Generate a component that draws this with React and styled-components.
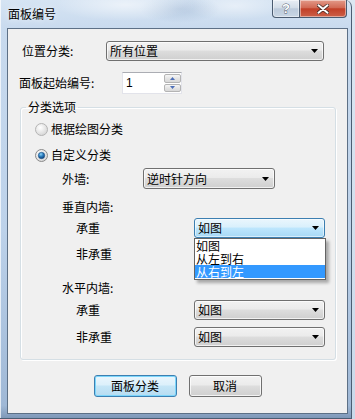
import React from 'react'
import styled, { createGlobalStyle } from 'styled-components'

const GlobalStyle = createGlobalStyle`
  html, body {
    margin: 0;
    padding: 0;
  }
  body {
    width: 355px;
    height: 419px;
    overflow: hidden;
    background: linear-gradient(180deg, #dce7f2, #c9d9ea);
    font-family: "Noto Sans CJK SC", "Noto Sans", sans-serif;
    font-size: 12px;
    color: #000;
  }
`

const Window = styled.div`
  width: 352px;
  height: 419px;
  box-sizing: border-box;
  padding: 0 3px 4px 7px;
  display: flex;
  flex-direction: column;
  border-radius: 0 7px 0 0;
  border-right: 1px solid #4b5d72;
  border-bottom: 1px solid #4b5d72;
  box-shadow: inset 1px 0 0 rgba(255, 255, 255, 0.7);
  background:
    radial-gradient(ellipse 70px 16px at 125px 5px, rgba(255, 255, 255, 0.55), transparent),
    radial-gradient(ellipse 40px 14px at 180px 9px, rgba(110, 140, 180, 0.25), transparent),
    radial-gradient(ellipse 50px 14px at 235px 6px, rgba(255, 255, 255, 0.45), transparent),
    linear-gradient(180deg, #d6e4f3 0%, #c8daee 7%, #bdd2ea 55%, #9fb8d6 97%, #7f98b8 100%);
`

const TitleBar = styled.div`
  height: 28px;
  display: flex;
  justify-content: space-between;
  align-items: flex-start;
  flex-shrink: 0;
`

const Title = styled.div`
  margin: 7px 0 0 1px;
  font-size: 12px;
  line-height: 14px;
  color: #000;
  text-shadow: 0 0 6px rgba(255, 255, 255, 0.9);
`

const CaptionButtons = styled.div`
  display: flex;
  margin-right: 1px;
`

const CaptionButton = styled.div`
  width: ${p => p.$w}px;
  height: 18px;
  box-sizing: border-box;
  border: 1px solid #4a5b70;
  border-top: none;
  display: flex;
  align-items: center;
  justify-content: center;
  box-shadow: inset 0 0 0 1px rgba(255, 255, 255, 0.45);
  border-radius: ${p => (p.$close ? '0 0 4px 0' : '0 0 0 4px')};
  border-left: ${p => (p.$close ? 'none' : '1px solid #4a5b70')};
  background: ${p =>
    p.$close
      ? 'linear-gradient(180deg, #e39a89 0%, #d26a55 45%, #c23f27 52%, #cc6048 100%)'
      : 'linear-gradient(180deg, #e8eef5 0%, #d3dde8 45%, #bccadb 52%, #c9d6e4 100%)'};
`

const Client = styled.div`
  flex: 1;
  background: #f0f0f0;
  border: 1px solid #5d7086;
  display: flex;
  flex-direction: column;
  padding-top: 12px;
`

const Row = styled.div`
  display: flex;
  align-items: center;
  height: ${p => p.$h || 20}px;
  margin-top: ${p => p.$mt || 0}px;
  padding-left: ${p => p.$pl || 0}px;
  flex-shrink: 0;
`

const Label = styled.div`
  width: ${p => (p.$w ? `${p.$w}px` : 'auto')};
  font-size: 12px;
  line-height: 14px;
  white-space: nowrap;
  flex-shrink: 0;
`

const Combo = styled.div`
  position: relative;
  width: ${p => p.$w}px;
  height: ${p => p.$h || 20}px;
  box-sizing: border-box;
  border: 1px solid ${p => (p.$focused ? '#3c7fb1' : '#707070')};
  border-radius: 3px;
  display: flex;
  align-items: center;
  padding-left: 3px;
  box-shadow: inset 0 0 0 1px ${p => (p.$focused ? 'rgba(255,255,255,0.55)' : 'rgba(255,255,255,0.7)')};
  background: ${p =>
    p.$focused
      ? 'linear-gradient(180deg, #eaf6fd 0%, #d9f0fc 45%, #bee6fd 50%, #a7d9f5 100%)'
      : 'linear-gradient(180deg, #f2f2f2 0%, #ebebeb 45%, #dddddd 50%, #cfcfcf 100%)'};
  flex-shrink: 0;
`

const ComboText = styled.span`
  flex: 1;
  font-size: 12px;
  line-height: 14px;
  white-space: nowrap;
`

const ComboArrow = styled.svg`
  width: 7px;
  height: 4px;
  margin-right: 5px;
`

const DropList = styled.div`
  position: absolute;
  left: -1px;
  top: calc(100% + 1px);
  width: 132px;
  box-sizing: border-box;
  background: #fff;
  border: 1px solid #646464;
  box-shadow: 3px 3px 3px rgba(0, 0, 0, 0.3);
  padding-bottom: 1px;
  z-index: 2;
`

const DropItem = styled.div`
  height: 13px;
  line-height: 13px;
  font-size: 12px;
  padding-left: 1px;
  white-space: nowrap;
  background: ${p => (p.$selected ? '#3399ff' : 'transparent')};
  color: ${p => (p.$selected ? '#fff' : '#000')};
`

const SpinBox = styled.div`
  width: 60px;
  height: 22px;
  box-sizing: border-box;
  display: flex;
  background: #fff;
  border: 1px solid #e2e3ea;
  border-top-color: #abadb3;
  flex-shrink: 0;
`

const SpinText = styled.div`
  flex: 1;
  padding-left: 3px;
  font-family: "Liberation Sans", "Noto Sans", sans-serif;
  font-size: 12px;
  line-height: 20px;
`

const SpinButtons = styled.div`
  width: 17px;
  display: flex;
  flex-direction: column;
  gap: 1px;
  padding: 1px 0;
  box-sizing: border-box;
`

const SpinButton = styled.div`
  flex: 1;
  box-sizing: border-box;
  border: 1px solid #b4b4b4;
  border-radius: 2px;
  display: flex;
  align-items: center;
  justify-content: center;
  background: linear-gradient(180deg, #f6f6f6 0%, #e4e4e4 50%, #d8d8d8 100%);
`

const Group = styled.fieldset`
  margin: 6px 0 0 12px;
  width: 316px;
  box-sizing: border-box;
  min-width: 0;
  padding: 0 0 12px 0;
  border: 1px solid #d5dfe5;
  border-radius: 3px;
  box-shadow: inset 1px 1px 0 #fff, 1px 1px 0 #fff;
  display: flex;
  flex-direction: column;
`

const Legend = styled.legend`
  margin-left: 5px;
  padding: 0 2px;
  font-size: 12px;
  line-height: 14px;
`

const RadioMark = styled.svg`
  width: 13px;
  height: 13px;
  margin-right: 3px;
  flex-shrink: 0;
`

const ButtonBar = styled.div`
  display: flex;
  justify-content: center;
  gap: 12px;
  margin-top: 15px;
`

const PushButton = styled.div`
  width: ${p => p.$w}px;
  height: 22px;
  box-sizing: border-box;
  border-radius: 3px;
  display: flex;
  align-items: center;
  justify-content: center;
  font-size: 12px;
  line-height: 14px;
  border: 1px solid ${p => (p.$default ? '#3c7fb1' : '#707070')};
  box-shadow: inset 0 0 0 1px ${p => (p.$default ? '#7cd6fb' : 'rgba(255,255,255,0.75)')};
  background: ${p =>
    p.$default
      ? 'linear-gradient(180deg, #eaf6fd 0%, #dcf0fb 45%, #c5e6f7 50%, #b6dcf1 100%)'
      : 'linear-gradient(180deg, #f2f2f2 0%, #ebebeb 45%, #dddddd 50%, #cfcfcf 100%)'};
`

const Arrow = () => (
  <ComboArrow viewBox="0 0 7 4">
    <path d="M0 0H7L3.5 4Z" fill="#000" />
  </ComboArrow>
)

const Select = ({ w, h, focused, value, children }) => (
  <Combo $w={w} $h={h} $focused={focused}>
    <ComboText>{value}</ComboText>
    <Arrow />
    {children}
  </Combo>
)

const Radio = ({ checked }) => (
  <RadioMark viewBox="0 0 13 13">
    <defs>
      <radialGradient id={checked ? 'rin' : 'rout'} cx="0.4" cy="0.35" r="0.7">
        <stop offset="0" stopColor="#ffffff" />
        <stop offset="1" stopColor="#d4d4d4" />
      </radialGradient>
      <radialGradient id="dot" cx="0.4" cy="0.3" r="0.7">
        <stop offset="0" stopColor="#8fd3f7" />
        <stop offset="0.5" stopColor="#2b7fc0" />
        <stop offset="1" stopColor="#0d3f78" />
      </radialGradient>
    </defs>
    <circle cx="6.5" cy="6.5" r="6" fill={`url(#${checked ? 'rin' : 'rout'})`} stroke={checked ? '#8b8b8b' : '#b4b4b4'} />
    {checked && <circle cx="6.5" cy="6.5" r="3.2" fill="url(#dot)" stroke="#1b4f85" strokeWidth="0.6" />}
  </RadioMark>
)

const SpinArrow = ({ up }) => (
  <svg width="5" height="3" viewBox="0 0 5 3">
    <path d={up ? 'M0 3H5L2.5 0Z' : 'M0 0H5L2.5 3Z'} fill="#4d6fb8" />
  </svg>
)

export default function App() {
  return (
    <>
      <GlobalStyle />
      <Window>
        <TitleBar>
          <Title>面板编号</Title>
          <CaptionButtons>
            <CaptionButton $w={28}>
              <svg width="10" height="13" viewBox="0 0 10 13">
                <text x="5" y="11" textAnchor="middle" fontFamily="Liberation Sans, sans-serif" fontWeight="bold" fontSize="13" fill="#fff" stroke="#4a5566" strokeWidth="0.8" paintOrder="stroke">?</text>
              </svg>
            </CaptionButton>
            <CaptionButton $w={47} $close>
              <svg width="12" height="10" viewBox="0 0 12 10">
                <path d="M1 1L11 9M11 1L1 9" stroke="#4a2a24" strokeWidth="3.6" strokeLinecap="round" />
                <path d="M1.5 1.2L10.5 8.8M10.5 1.2L1.5 8.8" stroke="#fff" strokeWidth="2" strokeLinecap="round" />
              </svg>
            </CaptionButton>
          </CaptionButtons>
        </TitleBar>

        <Client>
          <Row $pl={14}>
            <Label $w={84}>位置分类:</Label>
            <Select w={218} value="所有位置" />
          </Row>
          <Row $h={22} $mt={11} $pl={11}>
            <Label $w={103}>面板起始编号:</Label>
            <SpinBox>
              <SpinText>1</SpinText>
              <SpinButtons>
                <SpinButton><SpinArrow up /></SpinButton>
                <SpinButton><SpinArrow /></SpinButton>
              </SpinButtons>
            </SpinBox>
          </Row>

          <Group>
            <Legend>分类选项</Legend>
            <Row $mt={5} $pl={14}>
              <Radio />
              <Label>根据绘图分类</Label>
            </Row>
            <Row $mt={6} $pl={14}>
              <Radio checked />
              <Label>自定义分类</Label>
            </Row>
            <Row $h={21} $mt={3} $pl={41}>
              <Label $w={81}>外墙:</Label>
              <Select w={132} h={21} value="逆时针方向" />
            </Row>
            <Row $mt={8} $pl={41}>
              <Label>垂直内墙:</Label>
            </Row>
            <Row $mt={1} $pl={55}>
              <Label $w={118}>承重</Label>
              <Select w={131} focused value="如图">
                <DropList>
                  <DropItem>如图</DropItem>
                  <DropItem>从左到右</DropItem>
                  <DropItem $selected>从右到左</DropItem>
                </DropList>
              </Select>
            </Row>
            <Row $mt={6} $pl={55}>
              <Label $w={118}>非承重</Label>
            </Row>
            <Row $mt={14} $pl={41}>
              <Label>水平内墙:</Label>
            </Row>
            <Row $mt={2} $pl={55}>
              <Label $w={118}>承重</Label>
              <Select w={131} value="如图" />
            </Row>
            <Row $mt={7} $pl={55}>
              <Label $w={118}>非承重</Label>
              <Select w={131} value="如图" />
            </Row>
          </Group>

          <ButtonBar>
            <PushButton $w={83} $default>面板分类</PushButton>
            <PushButton $w={73}>取消</PushButton>
          </ButtonBar>
        </Client>
      </Window>
    </>
  )
}
